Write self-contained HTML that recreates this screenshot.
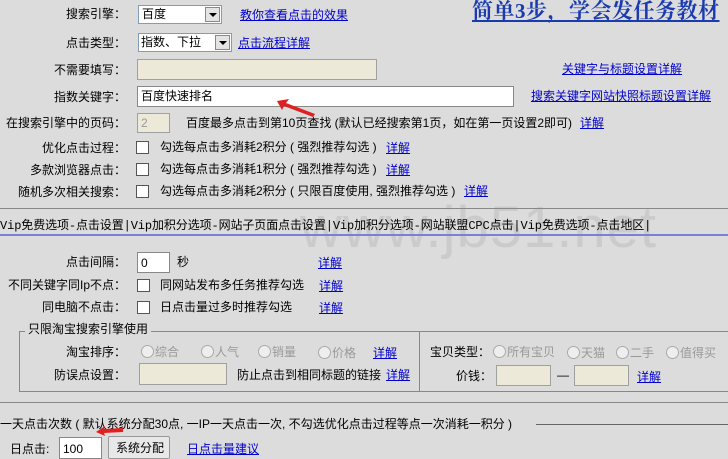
<!DOCTYPE html>
<html><head><meta charset="utf-8"><style>
body{margin:0;width:728px;height:459px;background:#dcdcdc;font-family:"Liberation Sans","Noto Sans CJK SC","WenQuanYi Zen Hei",sans-serif;font-size:12px;color:#000;position:relative;overflow:hidden}
.a{position:absolute;white-space:nowrap;line-height:14px}
.r{text-align:right}
a,.l{color:#0000cc;text-decoration:underline}
.box{position:absolute;box-sizing:border-box;border:1px solid #7f9db9;background:#fff}
.beige{background:#ece9d8;border-color:#a0a0a0}
.cb{position:absolute;width:13px;height:13px;box-sizing:border-box;border:1px solid #555;background:#fff}
.sel{position:absolute;box-sizing:border-box;border:1px solid #7f9db9;background:#fff;height:19px}
.dd{position:absolute;right:1px;top:1px;width:15px;height:15px;background:#e4e4e4;border:1px solid #888;box-sizing:border-box}
.dd:after{content:"";position:absolute;left:3px;top:5px;border-left:4px solid transparent;border-right:4px solid transparent;border-top:4px solid #000}
.rad{display:inline-block;width:11px;height:11px;border:1px solid #aaa;border-radius:50%;background:#eee;vertical-align:-2px;margin-right:1px;position:relative}
.gray{color:#999}
</style></head><body>
<div class="a" style="left:300px;top:196px;font-size:58px;line-height:64px;color:rgba(160,160,160,.28);letter-spacing:1px">www.jb51.net</div>
<div class="a" style="left:472px;top:0px;font-size:21px;font-weight:bold;color:#1a3ab0;text-decoration:underline;font-family:'Liberation Serif','Noto Serif CJK SC',serif;line-height:23px;letter-spacing:0.5px">简单3步，学会发任务教材</div>

<div class="a r" style="left:0;width:126px;top:7px">搜索引擎：</div>
<div class="sel" style="left:138px;top:5px;width:84px"><span class="a" style="left:3px;top:1px">百度</span><div class="dd"></div></div>
<a class="a" style="left:240px;top:8px">教你查看点击的效果</a>

<div class="a r" style="left:0;width:126px;top:36px">点击类型：</div>
<div class="sel" style="left:138px;top:33px;width:94px"><span class="a" style="left:2px;top:1px">指数、下拉</span><div class="dd"></div></div>
<a class="a" style="left:238px;top:36px">点击流程详解</a>

<div class="a r" style="left:0;width:126px;top:63px">不需要填写：</div>
<div class="box beige" style="left:137px;top:59px;width:240px;height:21px"></div>
<a class="a" style="left:562px;top:62px">关键字与标题设置详解</a>

<div class="a r" style="left:0;width:126px;top:90px">指数关键字：</div>
<div class="box" style="left:137px;top:86px;width:377px;height:21px;border-color:#888"><span class="a" style="left:3px;top:2px">百度快速排名</span></div>
<svg style="position:absolute;left:275px;top:97px" width="45" height="22"><path d="M2 4 L14 2 L11 6 L40 17 L38 20 L9 9 L7 13 Z" fill="#e02020"/></svg>
<a class="a" style="left:531px;top:89px">搜索关键字网站快照标题设置详解</a>

<div class="a r" style="left:0;width:126px;top:116px">在搜索引擎中的页码：</div>
<div class="box beige" style="left:137px;top:113px;width:33px;height:20px"><span class="a gray" style="left:3px;top:2px">2</span></div>
<div class="a" style="left:186px;top:116px">百度最多点击到第10页查找 (默认已经搜索第1页，如在第一页设置2即可)</div>
<a class="a" style="left:580px;top:116px">详解</a>

<div class="a r" style="left:0;width:126px;top:141px">优化点击过程：</div>
<div class="cb" style="left:136px;top:141px"></div>
<div class="a" style="left:160px;top:140px">勾选每点击多消耗2积分 ( 强烈推荐勾选 )</div>
<a class="a" style="left:386px;top:141px">详解</a>

<div class="a r" style="left:0;width:126px;top:163px">多款浏览器点击：</div>
<div class="cb" style="left:136px;top:163px"></div>
<div class="a" style="left:160px;top:162px">勾选每点击多消耗1积分 ( 强烈推荐勾选 )</div>
<a class="a" style="left:386px;top:163px">详解</a>

<div class="a r" style="left:0;width:126px;top:185px">随机多次相关搜索：</div>
<div class="cb" style="left:136px;top:185px"></div>
<div class="a" style="left:160px;top:184px">勾选每点击多消耗2积分 ( 只限百度使用, 强烈推荐勾选 )</div>
<a class="a" style="left:464px;top:184px">详解</a>

<div style="position:absolute;left:0;top:208px;width:728px;height:1px;background:#888"></div>
<div class="a" style="left:0;top:219px;font-family:'Liberation Mono','Noto Sans CJK SC',monospace;font-size:12px;line-height:14px;letter-spacing:-0.1px">Vip免费选项-点击设置|Vip加积分选项-网站子页面点击设置|Vip加积分选项-网站联盟CPC点击|Vip免费选项-点击地区|</div>
<div style="position:absolute;left:0;top:234px;width:728px;height:2px;background:#7b7fd8"></div>

<div class="a r" style="left:0;width:126px;top:255px">点击间隔：</div>
<div class="box" style="left:137px;top:252px;width:33px;height:21px;border-color:#888"><span class="a" style="left:3px;top:3px">0</span></div>
<div class="a" style="left:177px;top:255px">秒</div>
<a class="a" style="left:318px;top:256px">详解</a>

<div class="a r" style="left:0;width:126px;top:278px">不同关键字同Ip不点：</div>
<div class="cb" style="left:137px;top:279px"></div>
<div class="a" style="left:160px;top:278px">同网站发布多任务推荐勾选</div>
<a class="a" style="left:319px;top:279px">详解</a>

<div class="a r" style="left:0;width:126px;top:300px">同电脑不点击：</div>
<div class="cb" style="left:137px;top:301px"></div>
<div class="a" style="left:160px;top:300px">日点击量过多时推荐勾选</div>
<a class="a" style="left:319px;top:301px">详解</a>

<div style="position:absolute;left:19px;top:331px;width:720px;height:61px;border:1px solid #888;box-sizing:border-box"></div>
<div class="a" style="left:25px;top:322px;background:#dcdcdc;padding:0 3px">只限淘宝搜索引擎使用</div>
<div style="position:absolute;left:419px;top:331px;width:1px;height:61px;background:#888"></div>

<div class="a r" style="left:0;width:126px;top:345px">淘宝排序：</div>
<div class="a gray" style="left:141px;top:345px"><span class="rad"></span>综合</div>
<div class="a gray" style="left:201px;top:345px"><span class="rad"></span>人气</div>
<div class="a gray" style="left:258px;top:345px"><span class="rad"></span>销量</div>
<div class="a gray" style="left:318px;top:346px"><span class="rad"></span>价格</div>
<a class="a" style="left:373px;top:346px">详解</a>

<div class="a r" style="left:0;width:126px;top:368px">防误点设置：</div>
<div class="box beige" style="left:139px;top:363px;width:88px;height:22px"></div>
<div class="a" style="left:237px;top:368px">防止点击到相同标题的链接</div>
<a class="a" style="left:386px;top:368px">详解</a>

<div class="a" style="left:430px;top:345px">宝贝类型：</div>
<div class="a gray" style="left:493px;top:345px"><span class="rad"></span>所有宝贝</div>
<div class="a gray" style="left:567px;top:346px"><span class="rad"></span>天猫</div>
<div class="a gray" style="left:616px;top:346px"><span class="rad"></span>二手</div>
<div class="a gray" style="left:666px;top:346px"><span class="rad"></span>值得买</div>
<div class="a" style="left:456px;top:369px">价钱：</div>
<div class="box beige" style="left:496px;top:365px;width:55px;height:21px"></div>
<div class="a" style="left:557px;top:368px">—</div>
<div class="box beige" style="left:574px;top:365px;width:55px;height:21px"></div>
<a class="a" style="left:637px;top:370px">详解</a>

<div style="position:absolute;left:0;top:402px;width:728px;height:1px;background:#888"></div>
<div class="a" style="left:0;top:417px">一天点击次数 ( 默认系统分配30点, 一IP一天点击一次, 不勾选优化点击过程等点一次消耗一积分 )</div>
<div style="position:absolute;left:536px;top:424px;width:192px;height:1px;background:#666"></div>
<svg style="position:absolute;left:95px;top:425px" width="30" height="12"><path d="M1 7 L10 1 L9 4 L28 3 L28 7 L9 8 L10 11 Z" fill="#e02020"/></svg>

<div class="a" style="left:10px;top:442px">日点击:</div>
<div class="box" style="left:59px;top:437px;width:43px;height:22px;border-color:#888"><span class="a" style="left:3px;top:4px">100</span></div>
<div style="position:absolute;left:108px;top:436px;width:62px;height:23px;box-sizing:border-box;border:1px solid #999;background:#e8e8e8;border-radius:2px"><span class="a" style="left:7px;top:4px">系统分配</span></div>
<a class="a" style="left:187px;top:442px">日点击量建议</a>
</body></html>
